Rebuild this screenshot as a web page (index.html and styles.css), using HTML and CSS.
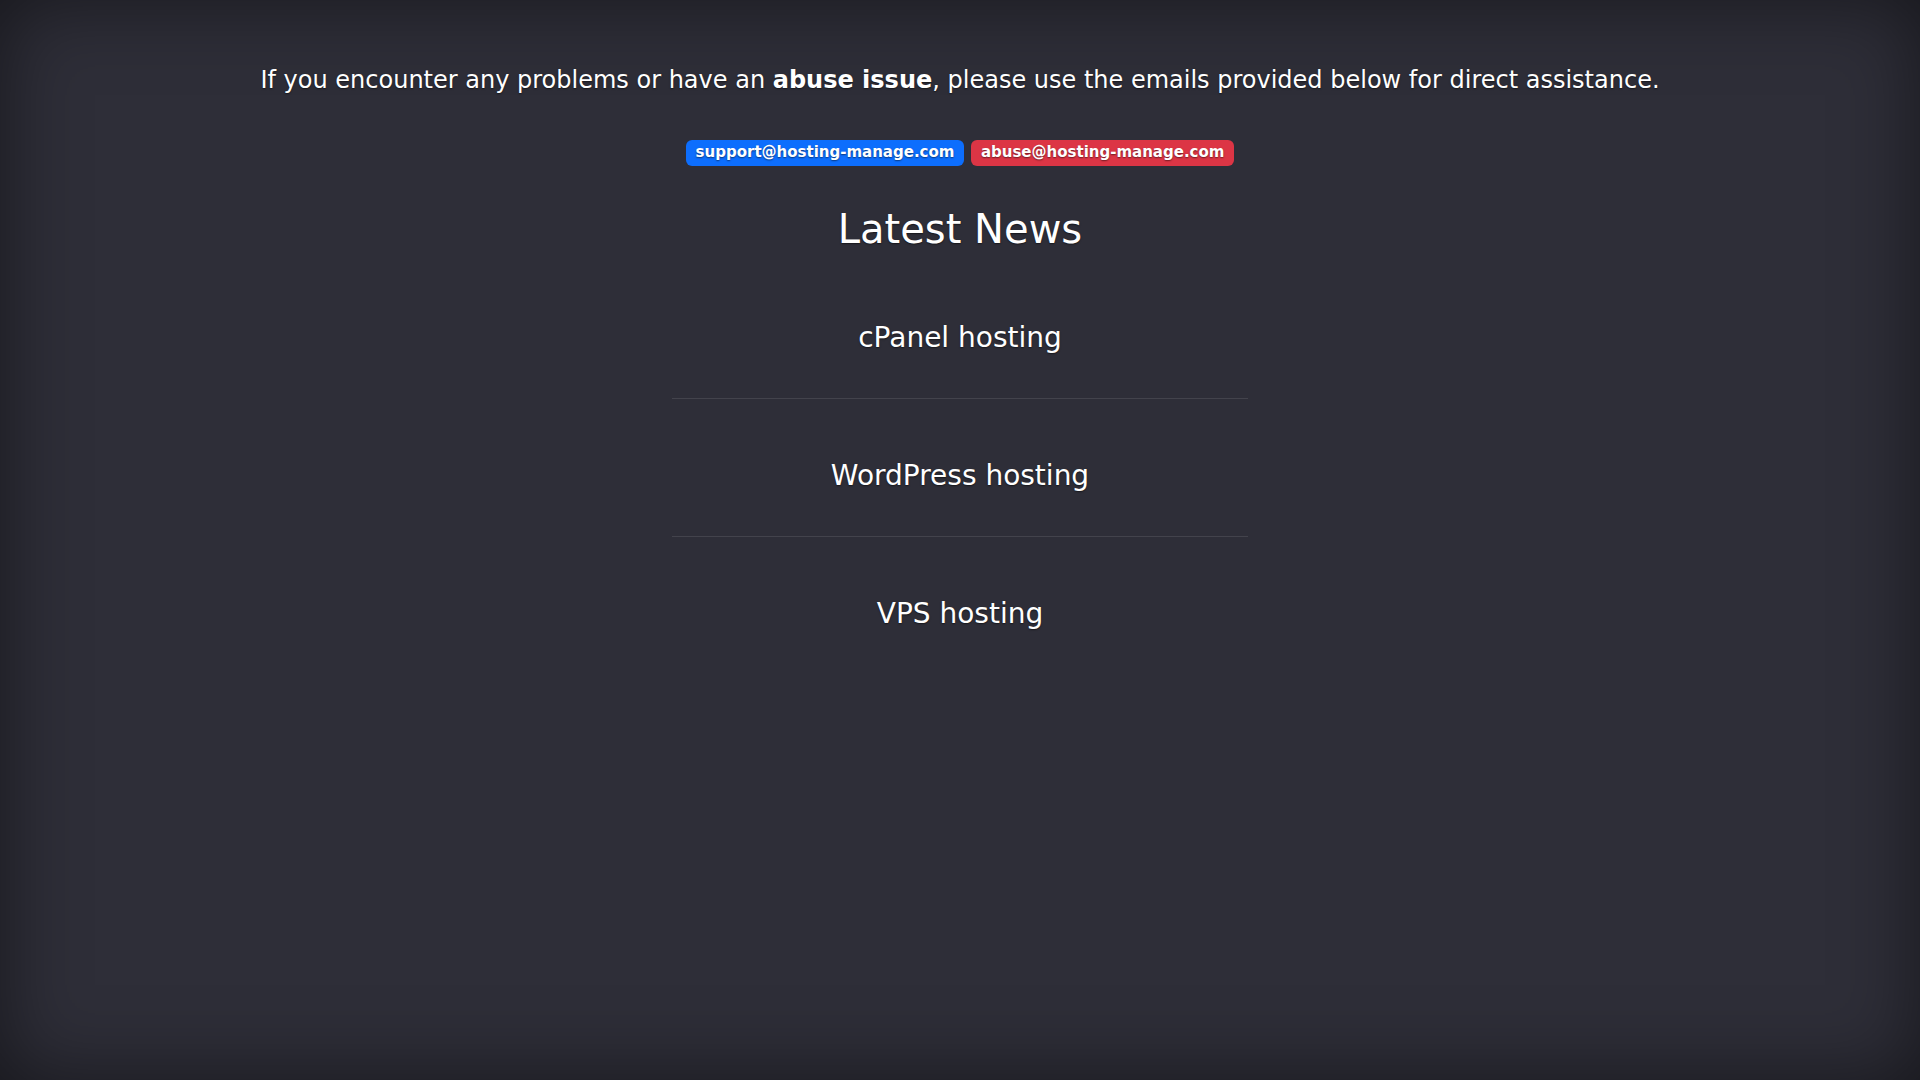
FILE: index.html
```html
<!DOCTYPE html>
<html lang="en">

<head>
    <meta charset="UTF-8">
    <meta name="viewport" content="width=device-width, initial-scale=1.0">
    <title>Hosting Manage</title>
    <link rel="stylesheet" href="styles.css">
</head>

<body>
    <div class="cover">
        <p class="notice">If you encounter any problems or have an <b>abuse issue</b>, please use the emails provided below for direct assistance.</p>

        <div class="emails">
            <span class="badge badge-blue">support@hosting-manage.com</span>
            <span class="badge badge-red">abuse@hosting-manage.com</span>
        </div>

        <h1 class="title">Latest News</h1>

        <div class="news">
            <div class="news-item">
                <h3>cPanel hosting</h3>
            </div>
            <div class="news-item">
                <h3>WordPress hosting</h3>
            </div>
            <div class="news-item">
                <h3>VPS hosting</h3>
            </div>
        </div>
    </div>
</body>

</html>
```

FILE: styles.css
```css
html,
body {
    height: 100%;
}

body {
    margin: 0;
    font-family: "DejaVu Sans", sans-serif;
    color: #fff;
    background-color: #2e2e38;
    box-shadow: inset 0 0 5rem rgba(0, 0, 0, 0.5);
    text-shadow: 0 0.05rem 0.1rem rgba(0, 0, 0, 0.5);
}

.cover {
    padding-top: 62px;
    text-align: center;
}

.notice {
    margin: 0;
    font-size: 24px;
    line-height: 36px;
}

.emails {
    display: flex;
    justify-content: center;
    gap: 7px;
    margin-top: 42px;
    font-size: 15px;
}

.badge {
    padding: 0.35em 0.65em;
    font-weight: 700;
    line-height: 1;
    border-radius: 0.375rem;
}

.badge-blue {
    background-color: #0d6efd;
}

.badge-red {
    background-color: #dc3545;
}

.title {
    margin: 39px 0 0;
    font-size: 40px;
    font-weight: 400;
    line-height: 48px;
}

.news {
    width: 576px;
    margin: 8px auto 0;
}

.news-item {
    padding: 60px 0 43px;
    border-bottom: 1px solid rgba(255, 255, 255, 0.1);
}

.news-item:last-child {
    border-bottom: none;
}

.news-item h3 {
    margin: 0;
    font-size: 28px;
    font-weight: 400;
    line-height: 34px;
}
```
